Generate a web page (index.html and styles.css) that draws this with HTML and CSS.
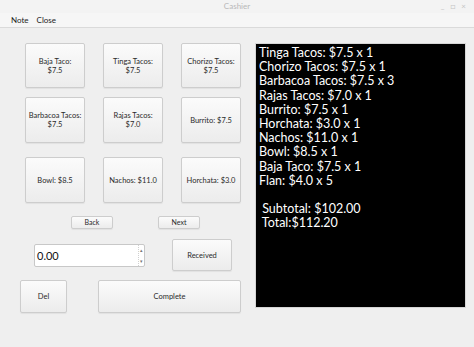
FILE: index.html
```html
<!DOCTYPE html>
<html lang="en">
<head>
    <meta charset="UTF-8">
    <meta name="viewport" content="width=device-width, initial-scale=1.0">
    <title>Cashier</title>
    <link rel="stylesheet" href="styles.css">
</head>
<body>
    <div class="titlebar">
        <span class="title">Cashier</span>
        <span class="controls">_ &#9633; &#215;</span>
    </div>
    <div class="menubar">
        <span>Note</span>
        <span>Close</span>
    </div>

    <div class="main">
        <div class="left">
            <div class="menu-row row1">
                <button class="item">Baja Taco:<br>$7.5</button>
                <button class="item">Tinga Tacos:<br>$7.5</button>
                <button class="item">Chorizo Tacos:<br>$7.5</button>
            </div>
            <div class="menu-row row2">
                <button class="item">Barbacoa Tacos:<br>$7.5</button>
                <button class="item">Rajas Tacos:<br>$7.0</button>
                <button class="item">Burrito: $7.5</button>
            </div>
            <div class="menu-row row3">
                <button class="item">Bowl: $8.5</button>
                <button class="item">Nachos: $11.0</button>
                <button class="item">Horchata: $3.0</button>
            </div>

            <div class="nav-row">
                <button class="small back">Back</button>
                <button class="small next">Next</button>
            </div>

            <div class="pay-row">
                <div class="spinbox">
                    <span class="value">0.00</span>
                    <span class="arrows">
                        <span>&#9652;</span>
                        <span>&#9662;</span>
                    </span>
                </div>
                <button class="received">Received</button>
            </div>

            <div class="action-row">
                <button class="del">Del</button>
                <button class="complete">Complete</button>
            </div>
        </div>

        <div class="receipt">Tinga Tacos: $7.5 x 1
Chorizo Tacos: $7.5 x 1
Barbacoa Tacos: $7.5 x 3
Rajas Tacos: $7.0 x 1
Burrito: $7.5 x 1
Horchata: $3.0 x 1
Nachos: $11.0 x 1
Bowl: $8.5 x 1
Baja Taco: $7.5 x 1
Flan: $4.0 x 5

 Subtotal: $102.00
 Total:$112.20</div>
    </div>
</body>
</html>
```

FILE: styles.css
```css
body {
    margin: 0;
    width: 474px;
    height: 347px;
    overflow: hidden;
    background-color: #efefef;
    font-family: Lato, "Open Sans", sans-serif;
    color: #333;
}
.titlebar {
    height: 13px;
    background-color: #f3f3f3;
    position: relative;
    font-size: 8px;
    line-height: 13px;
    text-align: center;
    color: #b8b8b8;
}
.controls {
    position: absolute;
    right: 6px;
    top: 0;
    letter-spacing: 2px;
    color: #c4c4c4;
}
.menubar {
    height: 14px;
    background-color: #f6f6f6;
    border-bottom: 1px solid #dadada;
    font-size: 8px;
    line-height: 14px;
    padding-left: 11px;
    color: #222;
}
.menubar span {
    margin-right: 6px;
}
.main {
    display: flex;
    padding-top: 15px;
}
.left {
    width: 255px;
    flex-shrink: 0;
}
button {
    font-family: inherit;
    color: #2a2a2a;
    background: linear-gradient(#fbfbfb, #ececec);
    border: 1px solid #cdcdcd;
    border-radius: 2px;
    box-shadow: 0 1px 1px rgba(0, 0, 0, 0.06);
    padding: 0;
    font-size: 7.5px;
    line-height: 9px;
    box-sizing: border-box;
}
.menu-row {
    display: flex;
    gap: 18px;
    padding-left: 25px;
}
.item {
    width: 60px;
    height: 46px;
}
.row1 .item {
    height: 45px;
}
.row2 {
    margin-top: 9px;
}
.row3 {
    margin-top: 14px;
}
.nav-row {
    display: flex;
    margin-top: 13px;
    padding-left: 71px;
}
.small {
    width: 42px;
    height: 13px;
    font-size: 7px;
}
.next {
    margin-left: 45px;
}
.pay-row {
    display: flex;
    align-items: center;
    margin-top: 10px;
    padding-left: 34px;
}
.spinbox {
    width: 111px;
    height: 23px;
    box-sizing: border-box;
    background-color: #fff;
    border: 1px solid #c8c8c8;
    border-radius: 2px;
    display: flex;
    align-items: center;
    justify-content: space-between;
}
.spinbox .value {
    font-size: 11px;
    padding-left: 2px;
    color: #111;
}
.arrows {
    display: flex;
    flex-direction: column;
    justify-content: space-between;
    height: 100%;
    width: 5px;
    border-left: 1px dotted #d0d0d0;
    font-size: 5px;
    line-height: 10px;
    color: #777;
    text-align: center;
}
.received {
    width: 60px;
    height: 32px;
    margin-left: 27px;
}
.action-row {
    display: flex;
    margin-top: 9px;
    padding-left: 20px;
}
.del {
    width: 47px;
    height: 33px;
}
.complete {
    width: 143px;
    height: 33px;
    margin-left: 31px;
}
.receipt {
    width: 211px;
    height: 265px;
    box-sizing: border-box;
    background-color: #000;
    border: 1px solid #d6d6d6;
    color: #fff;
    white-space: pre;
    font-size: 12.5px;
    line-height: 14.2px;
    padding: 2px 0 0 3px;
}
```
